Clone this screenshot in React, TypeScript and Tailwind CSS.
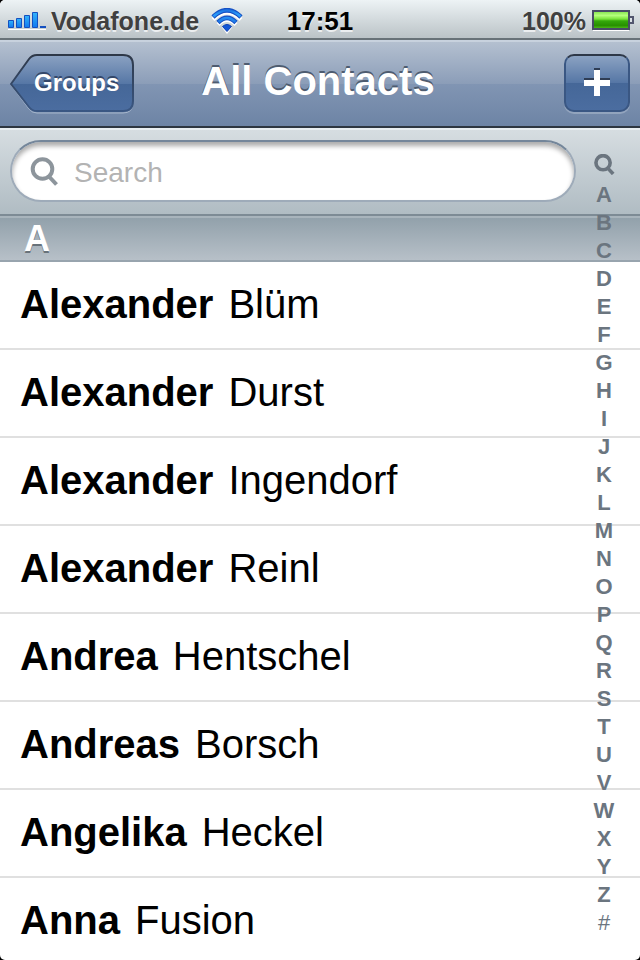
import React from 'react';

const contacts = [
  ['Alexander', 'Blüm'],
  ['Alexander', 'Durst'],
  ['Alexander', 'Ingendorf'],
  ['Alexander', 'Reinl'],
  ['Andrea', 'Hentschel'],
  ['Andreas', 'Borsch'],
  ['Angelika', 'Heckel'],
  ['Anna', 'Fusion'],
];

const letters = 'ABCDEFGHIJKLMNOPQRSTUVWXYZ#'.split('');

function SignalIcon() {
  return (
    <svg width="38" height="18" viewBox="0 0 38 18" aria-hidden="true">
      <defs>
        <linearGradient id="bar" x1="0" y1="0" x2="0" y2="1">
          <stop offset="0" stopColor="#33b4fa" />
          <stop offset="1" stopColor="#1078f0" />
        </linearGradient>
      </defs>
      <path d="M0 17.500h38" stroke="#fff" />
      <g fill="url(#bar)" stroke="#1450c0">
        <path d="M.5 8.500h5v7h-5z" />
        <path d="M8.500 6.500h5v9h-5z" />
        <path d="M16.500 3.500h5v12h-5z" />
        <path d="M24.500 .5h5v15h-5z" />
      </g>
      <path d="M32 14h6v2h-6z" fill="#1450c0" />
    </svg>
  );
}

function WifiIcon() {
  return (
    <svg width="32" height="26" viewBox="0 0 32 26" fill="none" aria-hidden="true">
      <defs>
        <linearGradient id="wifi" x1="0" y1="0" x2="0" y2="26" gradientUnits="userSpaceOnUse">
          <stop offset="0" stopColor="#1560d8" />
          <stop offset=".25" stopColor="#2a9cf8" />
          <stop offset="1" stopColor="#0a3fc8" />
        </linearGradient>
      </defs>
      <g stroke="#fff" strokeWidth="4" transform="translate(0 2)">
        <path d="M2 9.500Q16-4.500 30 9.500" />
        <path d="M7 14.500Q16 5.500 25 14.500" />
      </g>
      <path d="M11 19.500Q16 15 21 19.500L16 26z" fill="#fff" />
      <g stroke="#1550c4" strokeWidth="4.600">
        <path d="M2 9Q16-4.500 30 9" />
        <path d="M7 14.500Q16 5.500 25 14.500" />
      </g>
      <g stroke="url(#wifi)" strokeWidth="2.600">
        <path d="M2.500 8.500Q16-4 29.500 8.500" />
        <path d="M7.500 14Q16 6 24.500 14" />
      </g>
      <path d="M11.500 18.500Q16 14.500 20.500 18.500L16 23.500z" fill="#1256d6" stroke="#0a3fb4" />
    </svg>
  );
}

function BatteryIcon() {
  return (
    <svg width="42" height="22" viewBox="0 0 42 22" aria-hidden="true">
      <defs>
        <linearGradient id="charge" x1="0" y1="0" x2="0" y2="1">
          <stop offset="0" stopColor="#7fe04a" />
          <stop offset=".25" stopColor="#b4ff7c" />
          <stop offset=".45" stopColor="#78e238" />
          <stop offset=".55" stopColor="#35a80c" />
          <stop offset=".8" stopColor="#279000" />
          <stop offset="1" stopColor="#56c420" />
        </linearGradient>
      </defs>
      <path d="M1 20.500h36" stroke="#fff" />
      <rect x="1" y="1" width="36" height="18" fill="url(#charge)" stroke="#484c66" strokeWidth="2" />
      <path d="M38 7h3v6h-3" fill="#dce2e6" stroke="#52566e" strokeWidth="2" />
    </svg>
  );
}

function SearchIcon({ size, weight, className }: { size: number; weight: number; className: string }) {
  return (
    <svg width={size} height={size} viewBox="0 0 28 29" className={className} fill="none" stroke="currentColor" strokeWidth={weight} aria-hidden="true">
      <circle cx="12" cy="12" r="9.800" />
      <path d="M18.500 19.500L26 27.500" />
    </svg>
  );
}

function BackShape() {
  return (
    <svg className="absolute inset-0 h-full w-full" viewBox="0 0 124 60" preserveAspectRatio="none" aria-hidden="true">
      <defs>
        <linearGradient id="back" x1="0" y1="0" x2="0" y2="1">
          <stop offset="0" stopColor="#8ba2c2" />
          <stop offset=".52" stopColor="#5576a5" />
          <stop offset=".52" stopColor="#456798" />
          <stop offset="1" stopColor="#4b6da0" />
        </linearGradient>
        <linearGradient id="rim" x1="0" y1="0" x2="0" y2="1">
          <stop offset="0" stopColor="#2e3848" />
          <stop offset="1" stopColor="#3a5783" />
        </linearGradient>
      </defs>
      <path d="M27 2H113Q123 2 123 12V49Q123 59 113 59H27Q22 59 19 55L1 31L19 6Q22 2 27 2Z" fill="none" stroke="#a6b6cc" />
      <path d="M27 1H113Q123 1 123 11V47Q123 57 113 57H27Q22 57 19 53L1 30L19 5Q22 1 27 1Z" fill="url(#back)" stroke="url(#rim)" strokeWidth="2" />
    </svg>
  );
}

export default function App() {
  return (
    <div className="h-screen bg-black">
      <div className="relative flex h-full flex-col overflow-hidden rounded-[5px] bg-white font-['Liberation_Sans',Arial,sans-serif] text-black">
        <header className="grid h-10 shrink-0 grid-cols-[1fr_auto_1fr] items-center border-b-2 border-[#687278] bg-linear-to-b from-[#edf3f5] to-[#bbc3c7] px-2 text-[25px] leading-[38px] font-bold text-[#404040] [text-shadow:0_2px_0_#ffffffb0]">
          <div className="flex items-center pt-[2px]">
            <SignalIcon />
            <span className="ml-[5px]">Vodafone.de</span>
            <span className="ml-3"><WifiIcon /></span>
          </div>
          <time className="pt-[2px] text-[26px] text-black">17:51</time>
          <div className="-mr-[2px] flex items-center justify-end gap-[6px] pt-[2px]">
            <span>100%</span>
            <BatteryIcon />
          </div>
        </header>

        <nav className="grid h-[88px] shrink-0 grid-cols-[1fr_auto_1fr] items-center border-t-2 border-b-2 border-t-[#c8d2de] border-b-[#2d3640] bg-[linear-gradient(#b4c0d0,#8b9db8_50%,#8195b3_50%,#6d84a5)] px-[10px]">
          <button className="relative h-[60px] w-[124px] pb-[2px] pl-[24px] text-left text-[24px] font-bold text-white [text-shadow:0_-2px_0_#34486a]">
            <BackShape />
            <span className="relative">Groups</span>
          </button>
          <h1 className="pr-1 pb-[6px] text-[40px] leading-[48px] font-bold text-white [text-shadow:0_-2px_0_#4e5c70]">All Contacts</h1>
          <button
            aria-label="Add contact"
            className="mb-[2px] flex h-[58px] w-[66px] items-center justify-center justify-self-end rounded-[10px] border-2 border-[#3a5783] border-t-[#2e3848] bg-[linear-gradient(#8ba2c2,#5576a5_50%,#456798_50%,#4b6da0)] pb-[2px] shadow-[0_2px_0_#a6b6cc99]"
          >
            <svg width="26" height="28" viewBox="0 0 26 28" aria-hidden="true">
              <path d="M10 0h6v10h10v6H0v-6h10z" fill="#2f3d54" />
              <path d="M10 2h6v10h10v6H16v10h-6V18H0v-6h10z" fill="#fff" />
            </svg>
          </button>
        </nav>

        <div className="h-[88px] shrink-0 border-t-2 border-b-2 border-t-[#e8eef1] border-b-[#7d8b95] bg-linear-to-b from-[#d6dde1] to-[#b0bcc3] pt-[10px] pr-[64px] pl-[10px]">
          <label className="flex h-[62px] items-center rounded-full border-2 border-[#9eabb9] border-t-[#74869a] bg-white pl-[18px] shadow-[inset_0_4px_5px_#00000055]">
            <SearchIcon size={29} weight={4} className="text-[#8d959c]" />
            <input type="search" aria-label="Search" placeholder="Search" className="ml-[15px] min-w-0 flex-1 bg-transparent pt-1 text-[28px] leading-[36px] outline-none placeholder:text-[#b3b3b3]" />
          </label>
        </div>

        <main>
          <h2 className="h-[46px] border-t-2 border-b-2 border-t-[#a8b4bc] border-b-[#98a4ae] bg-linear-to-b from-[#92a1ab] to-[#b7c0c8] pl-6 text-[36px] leading-[42px] font-bold text-white [text-shadow:0_2px_0_#68727a]">A</h2>
          <ul>
            {contacts.map(([first, last]) => (
              <li key={first + last} className="flex h-[88px] gap-[15px] border-b-2 border-[#e0e0e0] pl-5 text-[40px] leading-[84px]">
                <span className="font-bold">{first}</span>
                <span>{last}</span>
              </li>
            ))}
          </ul>
        </main>

        <aside aria-label="Index" className="absolute top-[154px] right-[20px] flex w-8 flex-col items-center text-[22px] leading-[28px] font-bold text-[#6b757f]">
          <SearchIcon size={21} weight={5} className="mb-[6px]" />
          {letters.map((l) => (
            <span key={l} className={l === '#' ? 'font-normal' : ''}>{l}</span>
          ))}
        </aside>
      </div>
    </div>
  );
}
